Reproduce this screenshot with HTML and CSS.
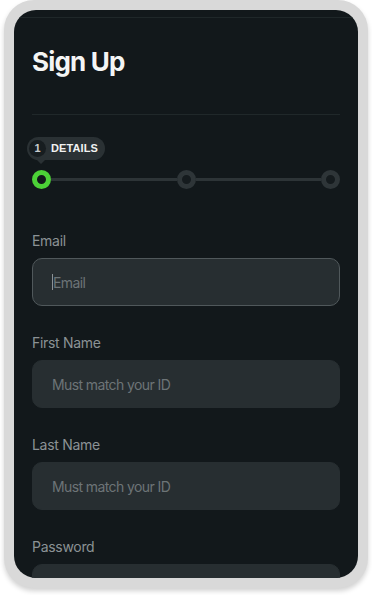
FILE: index.html
```html
<!DOCTYPE html>
<html>
<head>
<meta charset="utf-8">
<link rel="stylesheet" href="styles.css">
</head>
<body>
<div class="device">
  <div class="screen">
    <div class="topline"></div>
    <div class="content">
      <h1 class="title">Sign Up</h1>
      <div class="divider"></div>
      <div class="stepper">
        <div class="tip"><span class="tip-num">1</span><span class="tip-text">DETAILS</span></div>
        <div class="track">
          <span class="dot active"></span>
          <span class="line"></span>
          <span class="dot"></span>
          <span class="line"></span>
          <span class="dot"></span>
        </div>
      </div>
      <div class="field">
        <label class="label">Email</label>
        <div class="input focused"><span class="caret"></span><span class="ph">Email</span></div>
      </div>
      <div class="field">
        <label class="label">First Name</label>
        <div class="input"><span class="ph">Must match your ID</span></div>
      </div>
      <div class="field">
        <label class="label">Last Name</label>
        <div class="input"><span class="ph">Must match your ID</span></div>
      </div>
      <div class="field">
        <label class="label">Password</label>
        <div class="input"></div>
      </div>
    </div>
  </div>
</div>
</body>
</html>
```
FILE: styles.css
```css
html, body { margin: 0; padding: 0; background: #ffffff; }
body { width: 372px; height: 595px; overflow: hidden; font-family: Inter, "Noto Sans", sans-serif; }
.device {
  margin: 0 4px;
  width: 364px;
  height: 588px;
  box-sizing: border-box;
  padding: 10px;
  background: #d9d9d9;
  border-radius: 30px;
  box-shadow: 0 3px 5px rgba(0,0,0,0.18);
}
.screen {
  height: 568px;
  background: #12181b;
  border-radius: 22px;
  overflow: hidden;
  position: relative;
}
.topline { height: 7px; border-bottom: 1px solid #1f2729; }
.content { padding: 0 18px; }
.title {
  margin: 0;
  padding-top: 27px;
  font-size: 26px;
  line-height: 34px;
  font-weight: 700;
  color: #f4f5f5;
  letter-spacing: -0.8px;
}
.divider { height: 1px; background: #20282a; margin-top: 35px; }
.stepper { margin-top: 22px; position: relative; height: 52px; }
.tip {
  position: absolute;
  left: -5px;
  top: 0;
  height: 23px;
  display: flex;
  align-items: center;
  gap: 5px;
  padding: 0 7px 0 2px;
  background: #2a3134;
  border-radius: 12px;
}
.tip::after {
  content: "";
  position: absolute;
  left: 10px;
  bottom: -4px;
  border-left: 4px solid transparent;
  border-right: 4px solid transparent;
  border-top: 4px solid #2a3134;
}
.tip-num {
  width: 17px; height: 17px;
  border-radius: 50%;
  background: #171d20;
  color: #c9cccd;
  font: 700 11px/17px "Liberation Sans", Arial, sans-serif;
  text-align: center;
}
.tip-text {
  color: #f1f2f2;
  font: 700 11px/1 "Liberation Sans", Arial, sans-serif;
  letter-spacing: 0.1px;
}
.track {
  position: absolute;
  left: 0; right: 0;
  top: 33px;
  display: flex;
  align-items: center;
}
.dot {
  width: 9px; height: 9px;
  border: 5px solid #2e3538;
  border-radius: 50%;
  background: #151b1e;
  flex: none;
}
.dot.active { border-color: #4cd137; background: #12181b; }
.line { flex: 1; height: 3px; background: #2d3437; }
.field { margin-top: 43px; }
.field + .field { margin-top: 28px; }
.label {
  display: block;
  font-size: 14px;
  line-height: 18px;
  color: #8b9295;
  letter-spacing: -0.3px;
}
.input {
  margin-top: 8px;
  height: 48px;
  box-sizing: border-box;
  background: #272e31;
  border: 1px solid #272e31;
  border-radius: 10px;
  display: flex;
  align-items: center;
  padding-left: 19px;
}
.input.focused { border-color: #50585b; }
.caret { width: 1px; height: 16px; background: #8b9295; }
.ph { font-size: 14px; color: #6d7477; letter-spacing: -0.6px; }
```
